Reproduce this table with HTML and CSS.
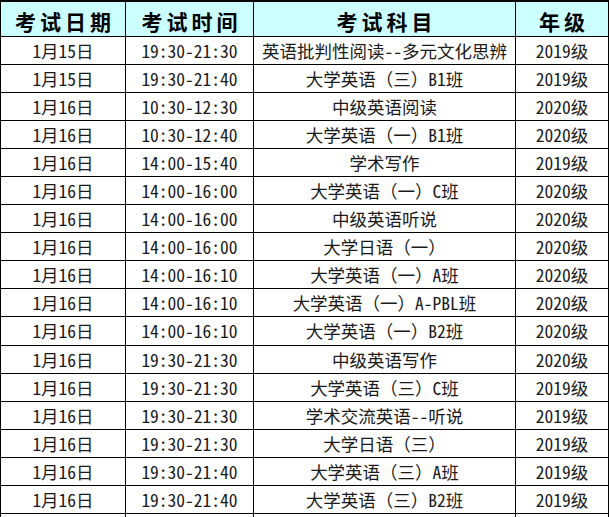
FILE: index.html
```html
<!DOCTYPE html>
<html lang="zh-CN">
<head>
<meta charset="utf-8">
<title>考试安排</title>
<link rel="stylesheet" href="styles.css">
</head>
<body>
<div class="sheet">
  <div class="hd">考试日期</div><div class="hd">考试时间</div><div class="hd">考试科目</div><div class="hd">年级</div>
  <div class="c">1月15日</div><div class="c">19:30-21:30</div><div class="c">英语批判性阅读--多元文化思辨</div><div class="c">2019级</div>
  <div class="c">1月15日</div><div class="c">19:30-21:40</div><div class="c">大学英语（三）B1班</div><div class="c">2019级</div>
  <div class="c">1月16日</div><div class="c">10:30-12:30</div><div class="c">中级英语阅读</div><div class="c">2020级</div>
  <div class="c">1月16日</div><div class="c">10:30-12:40</div><div class="c">大学英语（一）B1班</div><div class="c">2020级</div>
  <div class="c">1月16日</div><div class="c">14:00-15:40</div><div class="c">学术写作</div><div class="c">2019级</div>
  <div class="c">1月16日</div><div class="c">14:00-16:00</div><div class="c">大学英语（一）C班</div><div class="c">2020级</div>
  <div class="c">1月16日</div><div class="c">14:00-16:00</div><div class="c">中级英语听说</div><div class="c">2020级</div>
  <div class="c">1月16日</div><div class="c">14:00-16:00</div><div class="c">大学日语（一）</div><div class="c">2020级</div>
  <div class="c">1月16日</div><div class="c">14:00-16:10</div><div class="c">大学英语（一）A班</div><div class="c">2020级</div>
  <div class="c">1月16日</div><div class="c">14:00-16:10</div><div class="c">大学英语（一）A-PBL班</div><div class="c">2020级</div>
  <div class="c">1月16日</div><div class="c">14:00-16:10</div><div class="c">大学英语（一）B2班</div><div class="c">2020级</div>
  <div class="c">1月16日</div><div class="c">19:30-21:30</div><div class="c">中级英语写作</div><div class="c">2020级</div>
  <div class="c">1月16日</div><div class="c">19:30-21:30</div><div class="c">大学英语（三）C班</div><div class="c">2019级</div>
  <div class="c">1月16日</div><div class="c">19:30-21:30</div><div class="c">学术交流英语--听说</div><div class="c">2019级</div>
  <div class="c">1月16日</div><div class="c">19:30-21:30</div><div class="c">大学日语（三）</div><div class="c">2019级</div>
  <div class="c">1月16日</div><div class="c">19:30-21:40</div><div class="c">大学英语（三）A班</div><div class="c">2019级</div>
  <div class="c">1月16日</div><div class="c">19:30-21:40</div><div class="c">大学英语（三）B2班</div><div class="c">2019级</div>
  <div class="c"></div><div class="c"></div><div class="c"></div><div class="c"></div>
</div>
</body>
</html>
```
FILE: styles.css
```css
html, body {
  margin: 0;
  padding: 0;
  background: #fff;
}
.sheet {
  display: grid;
  grid-template-columns: 124px 127px 261px 92px;
  grid-template-rows: 34px repeat(18, 27.06px);
  gap: 1px;
  background: #000;
  padding: 2px 1px 1px 1px;
  width: 607px;
}
.hd {
  background: #ccffff;
  display: flex;
  align-items: center;
  justify-content: center;
  font-family: "Noto Sans CJK SC", sans-serif;
  font-weight: 700;
  font-size: 21px;
  letter-spacing: 4px;
  padding: 3px 0 0 4px;
  color: #000;
}
.c {
  background: #fff;
  display: flex;
  align-items: center;
  justify-content: center;
  font-family: "Noto Sans Mono CJK SC", "Noto Sans CJK SC", monospace;
  font-size: 17.5px;
  color: #1a1a1a;
  white-space: nowrap;
}
```
